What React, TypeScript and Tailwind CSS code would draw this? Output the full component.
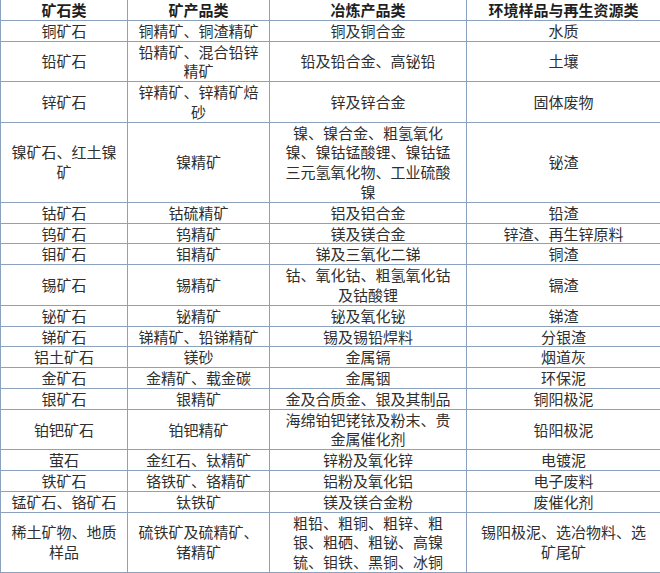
const head = ['矿石类', '矿产品类', '冶炼产品类', '环境样品与再生资源类'];

// 每个单元格的换行按原表保留
const rows: string[][] = [
  ['铜矿石', '铜精矿、铜渣精矿', '铜及铜合金', '水质'],
  ['铅矿石', '铅精矿、混合铅锌\n精矿', '铅及铅合金、高铋铅', '土壤'],
  ['锌矿石', '锌精矿、锌精矿焙\n砂', '锌及锌合金', '固体废物'],
  ['镍矿石、红土镍\n矿', '镍精矿', '镍、镍合金、粗氢氧化\n镍、镍钴锰酸锂、镍钴锰\n三元氢氧化物、工业硫酸\n镍', '铋渣'],
  ['钴矿石', '钴硫精矿', '铝及铝合金', '铅渣'],
  ['钨矿石', '钨精矿', '镁及镁合金', '锌渣、再生锌原料'],
  ['钼矿石', '钼精矿', '锑及三氧化二锑', '铜渣'],
  ['锡矿石', '锡精矿', '钴、氧化钴、粗氢氧化钴\n及钴酸锂', '镉渣'],
  ['铋矿石', '铋精矿', '铋及氧化铋', '锑渣'],
  ['锑矿石', '锑精矿、铅锑精矿', '锡及锡铅焊料', '分银渣'],
  ['铝土矿石', '镁砂', '金属镉', '烟道灰'],
  ['金矿石', '金精矿、载金碳', '金属铟', '环保泥'],
  ['银矿石', '银精矿', '金及合质金、银及其制品', '铜阳极泥'],
  ['铂钯矿石', '铂钯精矿', '海绵铂钯铑铱及粉末、贵\n金属催化剂', '铅阳极泥'],
  ['萤石', '金红石、钛精矿', '锌粉及氧化锌', '电镀泥'],
  ['铁矿石', '铬铁矿、铬精矿', '铝粉及氧化铝', '电子废料'],
  ['锰矿石、铬矿石', '钛铁矿', '镁及镁合金粉', '废催化剂'],
  ['稀土矿物、地质\n样品', '硫铁矿及硫精矿、\n锗精矿', '粗铅、粗铜、粗锌、粗\n银、粗硒、粗铋、高镍\n锍、钼铁、黑铜、冰铜', '锡阳极泥、选冶物料、选\n矿尾矿'],
];

export default function App() {
  return (
    <div className="w-[660px] h-[573px] bg-white overflow-hidden font-['Noto_Sans_CJK_SC','Noto_Sans_CJK_JP',sans-serif] text-[15px] leading-[19.78px] text-[#2f2f2f]">
      <table className="w-[660px] table-fixed border-collapse">
        <colgroup>
          <col className="w-[127px]" />
          <col className="w-[142px]" />
          <col className="w-[197px]" />
          <col className="w-[194px]" />
        </colgroup>
        <thead>
          <tr>
            {head.map((h) => (
              <th key={h} className="border border-t-0 border-[#8ca1bd] px-1 py-0 text-center font-bold text-[#1f1f1f] whitespace-nowrap">
                {h}
              </th>
            ))}
          </tr>
        </thead>
        <tbody>
          {rows.map((row, i) => (
            <tr key={i}>
              {row.map((cell, j) => (
                <td key={j} className="border border-[#8ca1bd] px-1 py-0 text-center align-middle whitespace-pre-line">
                  {cell}
                </td>
              ))}
            </tr>
          ))}
        </tbody>
      </table>
    </div>
  );
}
